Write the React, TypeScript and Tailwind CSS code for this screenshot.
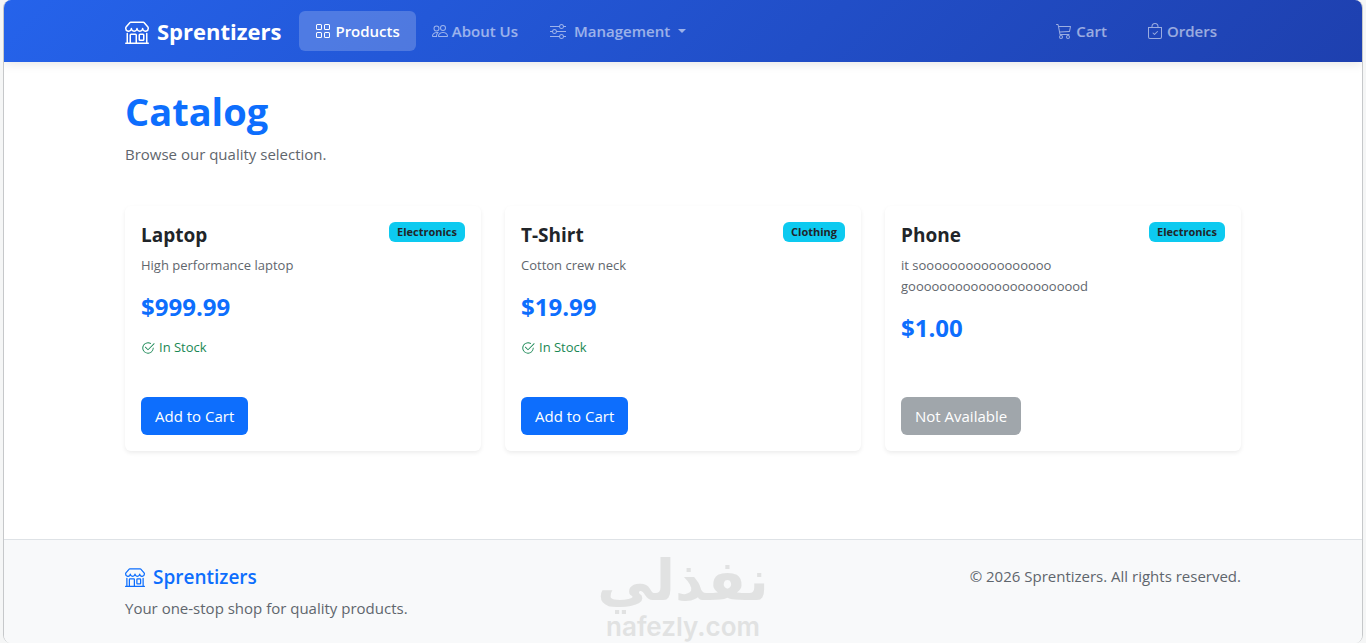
import type { ReactNode } from 'react';
import { BsShop, BsGrid, BsPeople, BsSliders, BsCart3, BsBagCheck, BsCheck2Circle } from 'react-icons/bs';

type Product = {
  id: number;
  name: string;
  category: string;
  description: string;
  price: number;
  available: boolean;
};

const products: Product[] = [
  { id: 1, name: 'Laptop', category: 'Electronics', description: 'High performance laptop', price: 999.99, available: true },
  { id: 2, name: 'T-Shirt', category: 'Clothing', description: 'Cotton crew neck', price: 19.99, available: true },
  { id: 3, name: 'Phone', category: 'Electronics', description: `it s${'o'.repeat(17)} g${'o'.repeat(22)}d`, price: 1, available: false },
];

function NavLink({ icon, active, children }: { icon: ReactNode; active?: boolean; children: ReactNode }) {
  return (
    <a
      href="#"
      className={`flex h-10 items-center gap-1 rounded-md px-4 text-[15px] font-semibold ${active ? 'bg-white/20 text-white' : 'text-white/55 hover:text-white'}`}
    >
      {icon}
      {children}
    </a>
  );
}

function ProductCard({ product }: { product: Product }) {
  return (
    <article className="flex flex-col rounded-md bg-white p-4 shadow-[0_2px_4px_rgba(0,0,0,0.075)]">
      <div className="mb-[7px] flex items-start justify-between">
        <h2 className="text-[19px] leading-[26px] font-bold">{product.name}</h2>
        <span className="rounded-md bg-[#0dcaf0] px-2 text-[11px] leading-5 font-bold">{product.category}</span>
      </div>
      <p className="mb-4 text-[13px] leading-[21px] text-[#5f666d]">{product.description}</p>
      <p className="mb-4 text-[24px] leading-[29px] font-bold text-[#0d6efd]">${product.price.toFixed(2)}</p>
      {product.available && (
        <p className="flex items-center gap-1 text-[13px] leading-[21px] text-[#198754]">
          <BsCheck2Circle size={14} />
          In Stock
        </p>
      )}
      <div className="mt-auto pt-[39px]">
        {product.available ? (
          <button className="h-[38px] rounded-md bg-[#0d6efd] px-[14px] text-[15px] text-white hover:bg-[#0b5ed7]">Add to Cart</button>
        ) : (
          <button disabled className="h-[38px] rounded-md bg-[#a0a6ab] px-[14px] text-[15px] text-white">Not Available</button>
        )}
      </div>
    </article>
  );
}

export default function App() {
  return (
    <div className="flex min-h-screen flex-col bg-[#f5f6f6] px-[3px] font-['Open_Sans','Noto_Sans',sans-serif] text-base text-[#212529]">
      <div className="flex flex-1 flex-col overflow-hidden rounded-lg border-x border-[#c6c8ca] bg-white">
        {/* Navbar */}
        <header className="bg-linear-135 from-[#2563eb] to-[#1e40af] shadow-[0_2px_10px_rgba(0,0,0,0.1)]">
          <nav className="mx-auto flex h-[62px] max-w-[1140px] items-center px-3">
            <a href="#" className="mr-[18px] flex items-center gap-2 pt-px text-[22px] font-bold text-white">
              <BsShop size={24} />
              Sprentizers
            </a>
            <NavLink active icon={<BsGrid size={16} />}>Products</NavLink>
            <NavLink icon={<BsPeople size={16} />}>About Us</NavLink>
            <button className="flex h-10 items-center gap-2 px-4 text-[15px] font-semibold text-white/55 hover:text-white">
              <BsSliders size={16} />
              Management
              <span className="border-x-4 border-t-4 border-x-transparent border-t-current" />
            </button>
            <div className="ml-auto flex gap-2 pr-2">
              <NavLink icon={<BsCart3 size={16} />}>Cart</NavLink>
              <NavLink icon={<BsBagCheck size={16} />}>Orders</NavLink>
            </div>
          </nav>
        </header>

        {/* Catalog */}
        <main className="mx-auto w-full max-w-[1140px] px-3 pt-6 pb-[88px]">
          <h1 className="mb-1.5 text-[38px] leading-[50px] font-bold text-[#0d6efd]">Catalog</h1>
          <p className="mb-10 text-[15px] leading-6 text-[#5f666d]">Browse our quality selection.</p>
          <div className="grid gap-6 md:grid-cols-3">
            {products.map((product) => (
              <ProductCard key={product.id} product={product} />
            ))}
          </div>
        </main>

        {/* Footer */}
        <footer className="relative flex-1 border-t border-[#dee2e6] bg-[#f8f9fa]">
          <div className="mx-auto flex max-w-[1140px] justify-between px-3 pt-6 pb-5 text-[15px] leading-6 text-[#5f666d]">
            <div>
              <p className="mb-1.5 flex items-center gap-2 text-[19px] leading-[26px] font-semibold text-[#0d6efd]">
                <BsShop size={20} />
                Sprentizers
              </p>
              <p>Your one-stop shop for quality products.</p>
            </div>
            <p>© 2026 Sprentizers. All rights reserved.</p>
          </div>
          <div className="pointer-events-none absolute inset-x-0 bottom-0 flex flex-col items-center text-[#e1e2e2]">
            <span lang="ar" dir="rtl" className="font-['DejaVu_Sans',sans-serif] text-[56px] leading-[60px] font-bold">نفذلي</span>
            <span className="font-['Inter',sans-serif] text-[26px] leading-8 font-semibold">nafezly.com</span>
          </div>
        </footer>
      </div>
    </div>
  );
}
